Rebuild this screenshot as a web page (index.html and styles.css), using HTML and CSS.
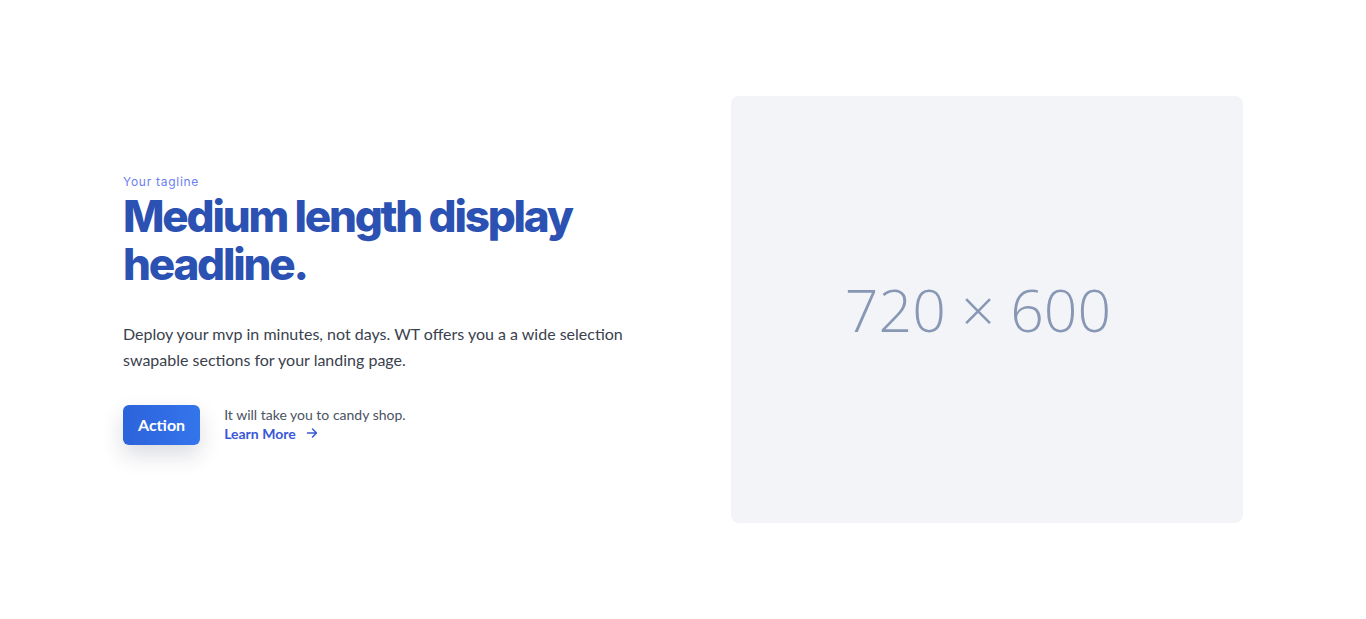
FILE: index.html
```html
<!DOCTYPE html>
<html lang="en">
<head>
<meta charset="utf-8">
<title>Hero</title>
<link rel="stylesheet" href="styles.css">
</head>
<body>
<section class="hero">
  <div class="container">
    <div class="copy">
      <p class="tagline">Your tagline</p>
      <h1 class="headline">Medium length display headline.</h1>
      <p class="lead">Deploy your mvp in minutes, not days. WT offers you a a wide selection swapable sections for your landing page.</p>
      <div class="cta">
        <a class="btn" href="#">Action</a>
        <div class="cta-note">
          <span class="note">It will take you to candy shop.</span>
          <a class="learn" href="#">Learn More
            <svg class="arrow" width="12" height="12" viewBox="0 0 12 12" fill="none" stroke="currentColor" stroke-width="1.5" stroke-linecap="round" stroke-linejoin="round"><path d="M1.5 6h9M6.5 2l4 4-4 4"/></svg>
          </a>
        </div>
      </div>
    </div>
    <div class="media">
      <div class="placeholder"><span>720 × 600</span></div>
    </div>
  </div>
</section>
</body>
</html>
```

FILE: styles.css
```css
* { box-sizing: border-box; }
html, body { margin: 0; padding: 0; background: #ffffff; }
body { font-family: "Lato", "Inter", sans-serif; color: #333b48; }

.hero { padding: 96px 0; }
.container {
  width: 1120px;
  margin: 0 auto;
  display: grid;
  grid-template-columns: 1fr 1fr;
  align-items: center;
}

.copy { padding-right: 40px; }
.tagline {
  margin: 0 0 3px;
  font-family: "Inter", sans-serif;
  font-size: 12px;
  letter-spacing: 0.06em;
  color: #6b80f2;
}
.headline {
  margin: 0;
  font-family: "Inter", sans-serif;
  font-weight: 800;
  font-size: 44px;
  line-height: 48px;
  letter-spacing: -0.05em;
  color: #2b51b2;
}
.lead {
  margin: 33px 0 0;
  font-size: 16px;
  line-height: 26px;
  color: #3a414d;
  max-width: 510px;
}

.cta { margin-top: 32px; display: flex; align-items: center; gap: 24px; }
.btn {
  display: inline-flex;
  align-items: center;
  justify-content: center;
  height: 40px;
  padding: 0 15px;
  border-radius: 6px;
  background: linear-gradient(90deg, #2c63db, #3475ec);
  color: #fff;
  font-size: 16px;
  font-weight: 700;
  text-decoration: none;
  box-shadow: 0 10px 22px rgba(30, 40, 70, 0.16);
}
.cta-note { display: flex; flex-direction: column; font-size: 14px; line-height: 19px; margin-top: -2px; }
.note { color: #4a5262; }
.learn {
  display: inline-flex;
  align-items: center;
  gap: 10px;
  color: #3a57d8;
  font-weight: 700;
  text-decoration: none;
}
.arrow { display: block; }

.media { padding-left: 48px; }
.placeholder {
  width: 512px;
  aspect-ratio: 720 / 600;
  border-radius: 8px;
  background: #f2f4f8;
  display: flex;
  align-items: center;
  justify-content: center;
  font-family: "Open Sans", sans-serif;
  font-weight: 300;
  font-size: 59px;
  color: #8898b4;
}
.placeholder span { margin-right: 18px; }
```
